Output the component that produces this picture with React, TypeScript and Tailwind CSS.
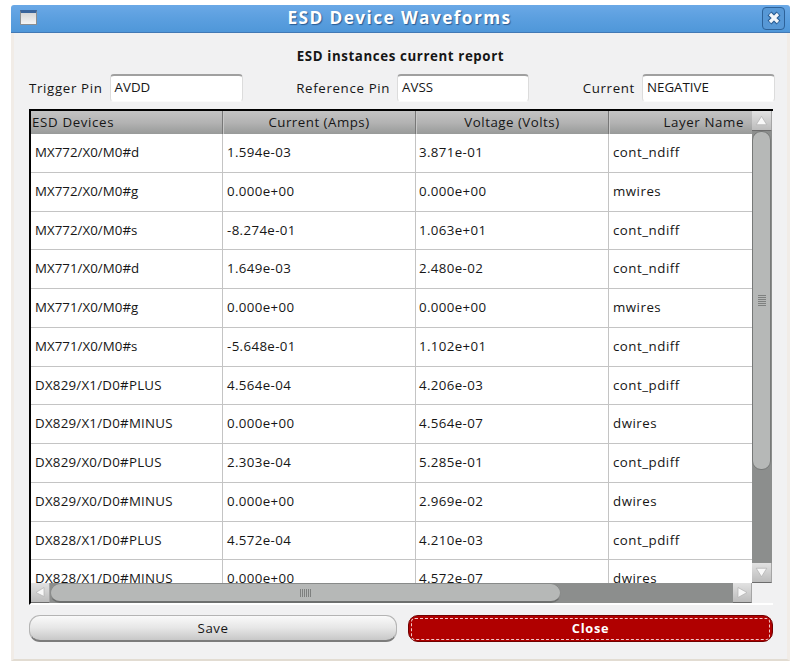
import React from "react";

type Row = [string, string, string, string];

const rows: Row[] = [
  ["MX772/X0/M0#d", "1.594e-03", "3.871e-01", "cont_ndiff"],
  ["MX772/X0/M0#g", "0.000e+00", "0.000e+00", "mwires"],
  ["MX772/X0/M0#s", "-8.274e-01", "1.063e+01", "cont_ndiff"],
  ["MX771/X0/M0#d", "1.649e-03", "2.480e-02", "cont_ndiff"],
  ["MX771/X0/M0#g", "0.000e+00", "0.000e+00", "mwires"],
  ["MX771/X0/M0#s", "-5.648e-01", "1.102e+01", "cont_ndiff"],
  ["DX829/X1/D0#PLUS", "4.564e-04", "4.206e-03", "cont_pdiff"],
  ["DX829/X1/D0#MINUS", "0.000e+00", "4.564e-07", "dwires"],
  ["DX829/X0/D0#PLUS", "2.303e-04", "5.285e-01", "cont_pdiff"],
  ["DX829/X0/D0#MINUS", "0.000e+00", "2.969e-02", "dwires"],
  ["DX828/X1/D0#PLUS", "4.572e-04", "4.210e-03", "cont_pdiff"],
  ["DX828/X1/D0#MINUS", "0.000e+00", "4.572e-07", "dwires"],
];

function Field({ label, value, width }: { label: string; value: string; width: string }) {
  return (
    <label className="flex h-[28px] items-center">
      <span className="mr-[7px] tracking-[0.65px]">{label}</span>
      <span
        className={`flex h-[28px] items-center rounded-[4px] border border-[#dcdcdc] border-t-2 border-t-[#a0a0a0] border-b-[#fafafa] bg-white pb-[3px] pl-[4px] ${width}`}
      >
        {value}
      </span>
    </label>
  );
}

function ArrowButton({ points, className }: { points: string; className: string }) {
  return (
    <button className={`shrink-0 border-b border-r border-b-[#6c6c6c] border-r-[#a5a5a5] bg-linear-to-b from-[#e2e2e2] to-[#bcbcbc] ${className}`}>
      <svg viewBox="0 0 18 18" className="size-full">
        <polygon points={points} fill="#f8f8f8" stroke="#b2b2b2" strokeWidth="0.7" />
      </svg>
    </button>
  );
}

function TitleBar() {
  return (
    <header className="flex h-[28px] shrink-0 items-center rounded-t-[3px] border-b border-b-[#4279b5] bg-linear-to-b from-[#6aa8e6] via-[#5b9fdf] via-50% to-[#4f97d9] pl-[9px] pr-[5px]">
      <span className="mb-[2px] h-[15px] w-[17px] border border-[#8b8e90] border-t-[3px] border-t-[#39649b] bg-linear-to-b from-[#d6d6d6] to-[#f5f5f5]" />
      <h1 className="flex-1 text-center text-[17.3px] font-bold leading-[24px] tracking-[1.4px] text-white [text-shadow:1px_1px_1px_#285b93]">
        <span className="relative -top-px">ESD Device Waveforms</span>
      </h1>
      <button className="mb-px flex size-[23px] items-center justify-center rounded-[4px] border-[1.5px] border-[#2d6299] bg-[#5798d6]">
        <svg viewBox="0 0 14 14" className="size-[14px] shrink-0">
          <path d="M2.5 2.5 L11.5 11.5 M11.5 2.5 L2.5 11.5" stroke="#285b92" strokeWidth="5.6" strokeLinecap="butt" />
          <path d="M3 3 L11 11 M11 3 L3 11" stroke="#f2f6fa" strokeWidth="3.2" strokeLinecap="butt" />
        </svg>
      </button>
    </header>
  );
}

export default function App() {
  return (
    <div className="h-[670px] w-[792px] overflow-hidden bg-white pl-[11px] pt-[5px] font-['Open_Sans',sans-serif] text-[13.3px] leading-[18px] text-[#161616]">
      <main className="flex h-[656px] w-[779px] flex-col">
        <TitleBar />
        <div className="flex flex-1 flex-col border-x-[3px] border-b-2 border-x-[#f1ece7] border-b-[#e2dcd2] bg-[#f1f1f2] pl-[15px] pr-[15px]">
          <h2 className="mt-[14px] text-center text-[13.3px] font-bold leading-[18px] tracking-[0.6px]">
            ESD instances current report
          </h2>
          <div className="mt-[9px] flex h-[28px] w-[746px] justify-between">
            <Field label="Trigger Pin" value="AVDD" width="w-[133px]" />
            <Field label="Reference Pin" value="AVSS" width="w-[132px]" />
            <Field label="Current" value="NEGATIVE" width="w-[133px]" />
          </div>

          <section className="mt-[7px] flex h-[496px] w-[744px] flex-col border-b-2 border-l-2 border-t-2 border-b-white border-l-black border-t-black">
            <div className="flex h-[472px]">
              <div className="h-[472px] w-[721px] overflow-hidden bg-white">
                <div className="flex h-[23px] bg-linear-to-b from-[#c3c3c3] via-[#b3b3b3] to-[#989a99] leading-[23px] tracking-[0.5px]">
                  <div className="w-[192px] border-r border-[#777] pl-[1px]">
                    <span className="tracking-[0.65px]">ESD Devices</span>
                  </div>
                  <div className="w-[193px] border-r border-[#777] text-center shadow-[inset_1px_0_0_#c8c8c8]">Current (Amps)</div>
                  <div className="w-[193px] border-r border-[#777] text-center shadow-[inset_1px_0_0_#c8c8c8]">Voltage (Volts)</div>
                  <div className="flex-1 pr-[8px] text-right tracking-[0.6px] shadow-[inset_1px_0_0_#c8c8c8]">Layer Name</div>
                </div>
                {rows.map((row, i) => (
                  <div key={i} className="flex h-[38.75px] items-stretch border-b border-[#c4c4c4] leading-[37px]">
                    <div
                      className={`w-[192px] border-r border-[#c4c4c4] pl-[4px] ${row[0].startsWith("DX") ? "tracking-[0.24px]" : "tracking-[0.03px]"}`}
                    >
                      {row[0]}
                    </div>
                    <div className="w-[193px] border-r border-[#c4c4c4] pl-[4px] tracking-[0.36px]">{row[1]}</div>
                    <div className="w-[193px] border-r border-[#c4c4c4] pl-[3px] tracking-[0.36px]">{row[2]}</div>
                    <div className="flex-1 pl-[4px] tracking-[0.5px]">{row[3]}</div>
                  </div>
                ))}
              </div>
              <div className="flex w-[20px] flex-col bg-[#8c8e8d]">
                <ArrowButton points="9,5 14,13 4,13" className="h-[20px] w-[20px]" />
                <div className="flex h-[339px] w-[19px] items-center justify-center rounded-[9px] border border-[#777978] bg-[#b6b8b7]">
                  <div className="flex w-[8px] flex-col gap-px">
                    {[0, 1, 2, 3, 4, 5].map((n) => (
                      <span key={n} className="h-px bg-[#7e807f]" />
                    ))}
                  </div>
                </div>
                <ArrowButton points="4,5 14,5 9,13" className="mt-auto h-[20px] w-[20px]" />
              </div>
            </div>
            <div className="flex h-[20px] w-[721px] bg-[#8c8e8d]">
              <ArrowButton points="13,4 13,13 5,9" className="h-[20px] w-[19px]" />
              <div className="flex h-[20px] w-[511px] items-center justify-center rounded-[10px] border border-b-2 border-[#888a89] border-b-[#6d6f6e] bg-[#b6b8b7]">
                <div className="flex h-[8px] gap-px">
                  {[0, 1, 2, 3, 4, 5].map((n) => (
                    <span key={n} className="w-px bg-[#7e807f]" />
                  ))}
                </div>
              </div>
              <ArrowButton points="5,4 14,9 5,14" className="ml-auto h-[20px] w-[19px]" />
            </div>
          </section>

          <div className="mt-[10px] flex w-[744px] justify-between leading-[24px]">
            <button className="h-[27px] w-[368px] rounded-[11px] border border-b-2 border-[#b4b4b4] border-b-[#7c7c7c] bg-linear-to-b from-[#fafafa] via-[#e6e6e6] to-[#c8c8c8] tracking-[0.5px]">
              Save
            </button>
            <button className="h-[27px] w-[365px] rounded-[10px] border border-[#700000] bg-[#b00000] px-[2px] py-[1px] text-[12.8px] font-bold tracking-[0.7px] text-white">
              <span className="flex h-[22px] items-center justify-center rounded-[4px] border border-dashed border-[#f3caca] pb-[2px]">
                Close
              </span>
            </button>
          </div>
        </div>
      </main>
    </div>
  );
}
